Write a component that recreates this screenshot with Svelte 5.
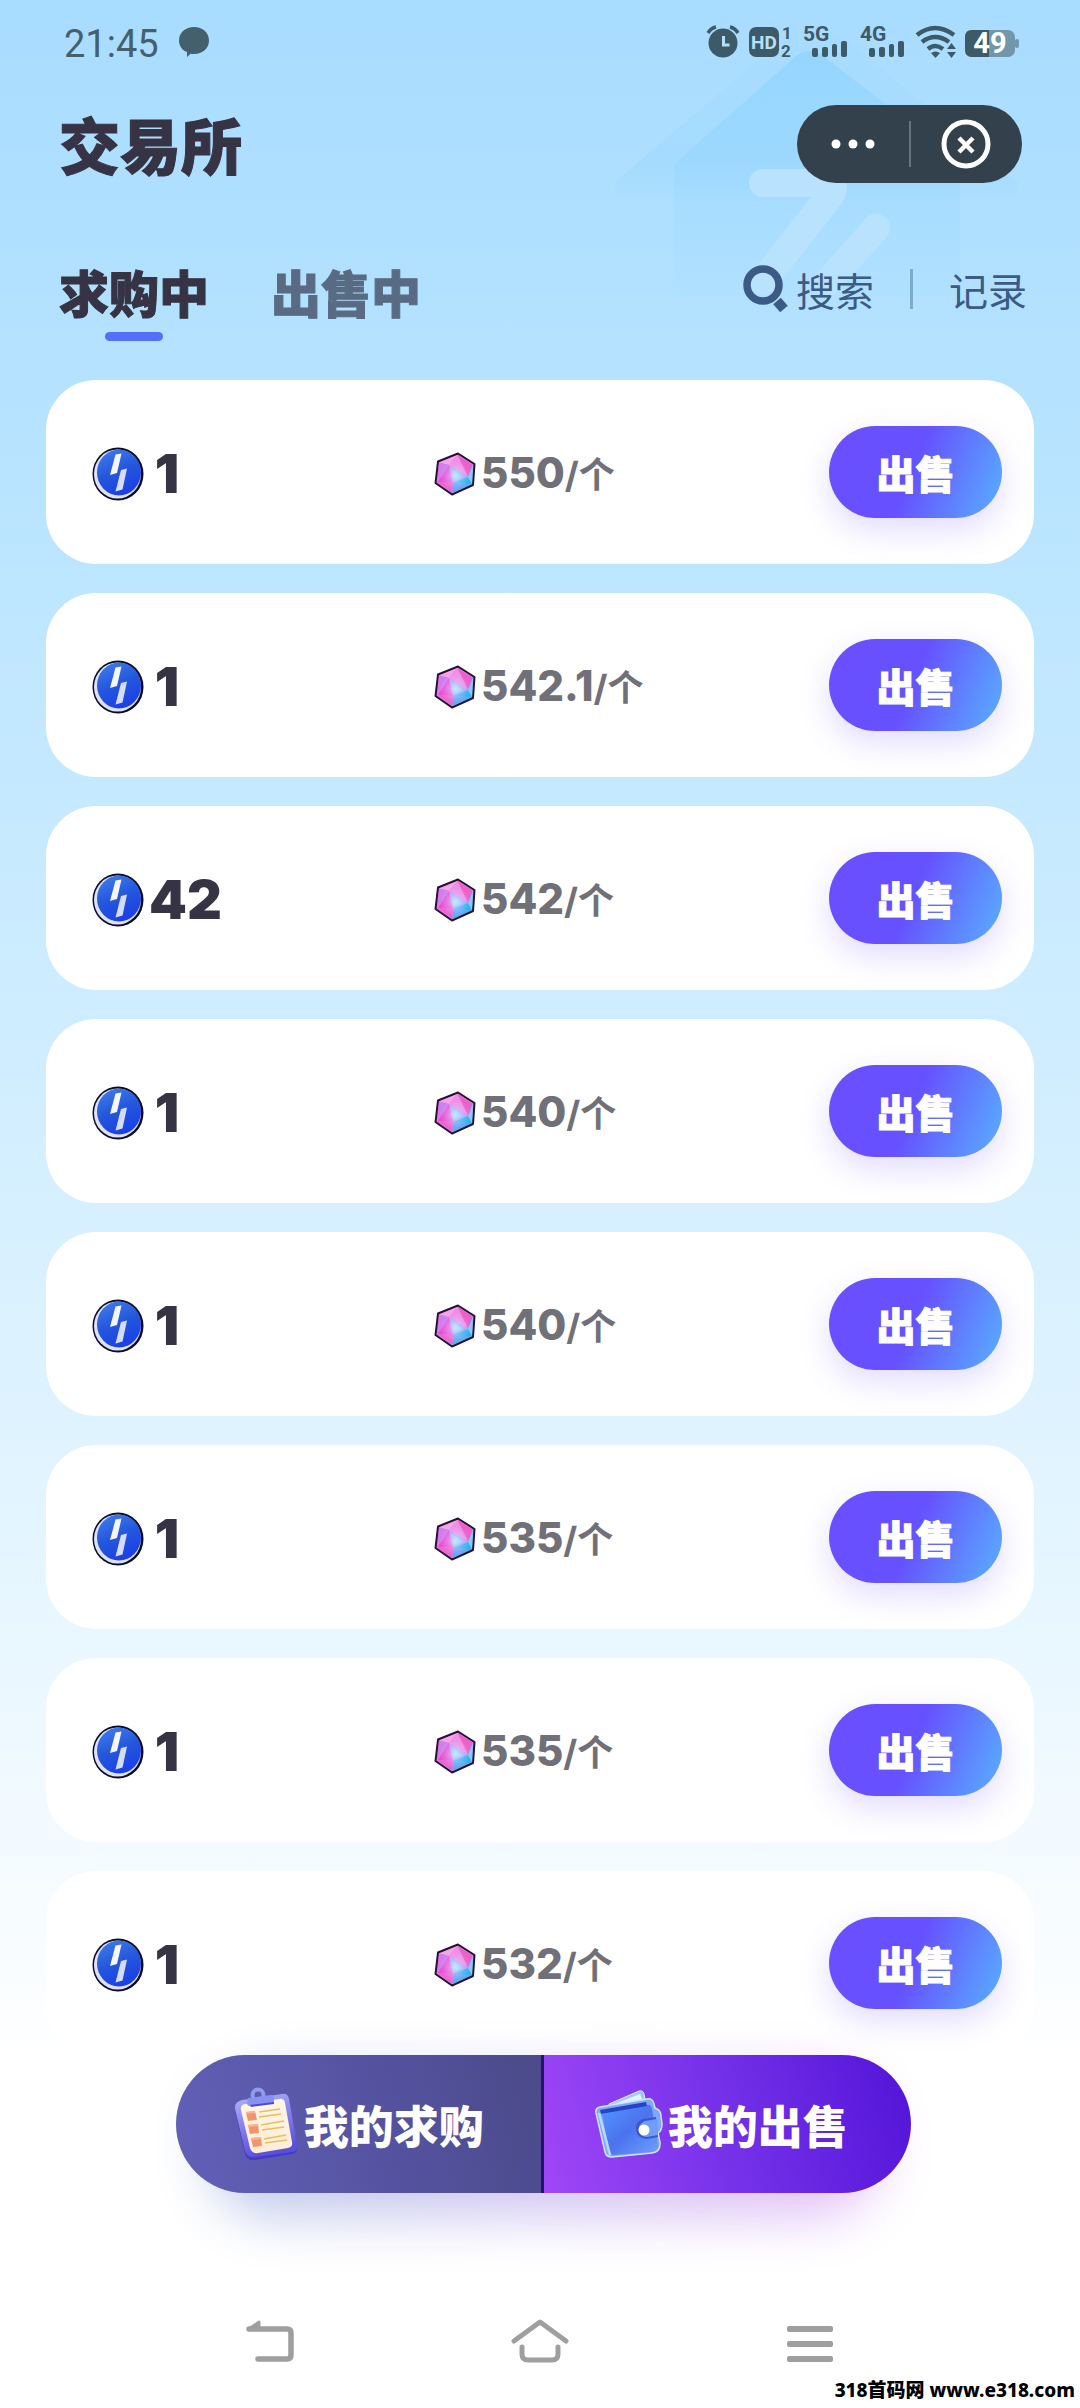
<script>
  let activeTab = "buying";

  const tabs = [
    { id: "buying", label: "求购中" },
    { id: "selling", label: "出售中" },
  ];

  const orders = [
    { amount: 1, price: "550" },
    { amount: 1, price: "542.1" },
    { amount: 42, price: "542" },
    { amount: 1, price: "540" },
    { amount: 1, price: "540" },
    { amount: 1, price: "535" },
    { amount: 1, price: "535" },
    { amount: 1, price: "532" },
  ];

  const selectTab = (id) => {
    activeTab = id;
  };
</script>

<!-- Shared shapes -->
<svg class="sprite" aria-hidden="true">
  <defs>
    <linearGradient id="coinFace" x1="0.2" y1="0" x2="0.6" y2="1">
      <stop offset="0" stop-color="#3f7bea" />
      <stop offset="0.5" stop-color="#2457dc" />
      <stop offset="1" stop-color="#1a3fe8" />
    </linearGradient>
    <linearGradient id="gemFace" x1="0.1" y1="0.2" x2="0.9" y2="0.8">
      <stop offset="0" stop-color="#ef62cf" />
      <stop offset="0.5" stop-color="#d58af2" />
      <stop offset="1" stop-color="#31b4f0" />
    </linearGradient>
    <radialGradient id="gemGlow" cx="0.5" cy="0.55" r="0.4">
      <stop offset="0" stop-color="#d9f2ff" stop-opacity="0.75" />
      <stop offset="1" stop-color="#d9b8ff" stop-opacity="0" />
    </radialGradient>
    <linearGradient id="clipEdge" x1="0" y1="0" x2="0.3" y2="1">
      <stop offset="0" stop-color="#b3b5fb" />
      <stop offset="1" stop-color="#5a50dc" />
    </linearGradient>
    <linearGradient id="clipPaper" x1="0" y1="0" x2="0" y2="1">
      <stop offset="0" stop-color="#fff6e4" />
      <stop offset="1" stop-color="#ffecd6" />
    </linearGradient>
    <linearGradient id="walletFace" x1="0" y1="0" x2="1" y2="1">
      <stop offset="0" stop-color="#5594ff" />
      <stop offset="0.5" stop-color="#4b73ee" />
      <stop offset="1" stop-color="#6fa2fb" />
    </linearGradient>
    <linearGradient id="houseBody" x1="0" y1="0" x2="0" y2="1">
      <stop offset="0" stop-color="#84d0ff" stop-opacity="0.55" />
      <stop offset="1" stop-color="#9cd9ff" stop-opacity="0.1" />
    </linearGradient>
    <linearGradient id="houseRoof" x1="0" y1="0" x2="0" y2="1">
      <stop offset="0" stop-color="#9ad8ff" stop-opacity="0.1" />
      <stop offset="0.8" stop-color="#93d3fb" stop-opacity="0.35" />
      <stop offset="1" stop-color="#9ad8ff" stop-opacity="0.1" />
    </linearGradient>
  </defs>
  <symbol id="coin" viewBox="0 0 52 54">
    <ellipse cx="26" cy="27" rx="25.500" ry="26.500" fill="#0b0d26" />
    <ellipse cx="25.500" cy="27" rx="23.500" ry="24.500" fill="#dfe0fb" />
    <ellipse cx="27" cy="25.500" rx="22" ry="23" fill="url(#coinFace)" />
    <path d="M23.500 7.500l6-1-4.500 19.500-7 2z" fill="#f4f5ff" />
    <path d="M29 23l6-1.500-4.500 21-7 2z" fill="#d6dcfb" />
  </symbol>
  <symbol id="gem" viewBox="0 0 42 44">
    <path d="M4 9.500L24 1.500 40.500 12 39 33 18 42.500 1.500 31z" fill="url(#gemFace)" stroke="#261233" stroke-width="2" stroke-linejoin="round" />
    <path d="M5 10.500L23.500 3 15 13z" fill="#f4a5ea" />
    <path d="M23.500 3L39 12.500 34 25z" fill="#ef5fc9" />
    <path d="M23.500 3L15 13 34 25z" fill="#f08fe4" />
    <path d="M5 10.500L15 13 4 30z" fill="#cf7eee" />
    <path d="M15 13L4 30l15 1z" fill="#ee4bd0" />
    <path d="M15 13l19 12-15 6z" fill="#a9a4f6" />
    <path d="M19 18l10 7-9 3z" fill="#7ad3fa" />
    <path d="M34 25l4 7-19-1z" fill="#22b9ef" />
    <path d="M19 31l19 1-19 9z" fill="#59a9f2" />
    <path d="M4 30l15 1-1 10z" fill="#f25fcf" />
    <path d="M39 12.500L38 32l-4-7z" fill="#8fc6fa" />
    <circle cx="21" cy="22" r="19" fill="url(#gemGlow)" />
  </symbol>
</svg>

<div class="page">
  <svg class="house" viewBox="0 0 420 280" aria-hidden="true">
    <path d="M5 166L174 22q30-24 60 0l174 144v16H5z" fill="url(#houseRoof)" />
    <path d="M64 148L184 42q16-14 32 0l134 104v134H64z" fill="url(#houseBody)" />
    <path d="M153 167h60q16 0 6 14l-66 84" fill="none" stroke="#b9e2ff" stroke-width="28" stroke-linecap="round" stroke-linejoin="round" />
    <path d="M266 212l-48 54" fill="none" stroke="#b9e2ff" stroke-width="28" stroke-linecap="round" />
  </svg>

  <div class="status-bar">
    <div class="status-left">
      <span class="time">21:45</span>
      <svg width="30" height="30" viewBox="0 0 30 30" fill="#44606c" aria-hidden="true">
        <path d="M15 0c8.500 0 15 5.600 15 13.500S23.500 27 15 27q-2-.1-3.500-.3L8 30v-5C3 23 0 19 0 13.500 0 5.600 6.500 0 15 0z" />
      </svg>
    </div>
    <svg class="status-icons" width="314" height="54" viewBox="0 -10 314 54" fill="#3d5a68" aria-hidden="true">
      <circle cx="17" cy="18" r="14.500" />
      <path d="M2 8q3-5 8-6M24 2q5 1 8 6" fill="none" stroke="#3d5a68" stroke-width="3.500" />
      <path d="M17.500 11v9h6" fill="none" stroke="#b4e0fb" stroke-width="3" />
      <rect x="43" y="2" width="30" height="30" rx="7" />
      <text x="58" y="24" class="hd" text-anchor="middle">HD</text>
      <text x="76" y="14" class="tiny">1</text>
      <text x="75" y="32" class="tiny">2</text>
      <text x="97" y="16" class="net">5G</text>
      <g id="bars">
        <rect x="106" y="23" width="6" height="9" rx="2" />
        <rect x="116" y="22" width="6" height="10" rx="2" />
        <rect x="126" y="19" width="5" height="13" rx="2" />
        <rect x="135" y="16" width="6" height="16" rx="2" />
      </g>
      <text x="154" y="16" class="net">4G</text>
      <use href="#bars" x="57" />
      <g fill="none" stroke="#3d5a68" stroke-width="4.500">
        <path d="M211 10q18-14 37 0" />
        <path d="M216 17q13-10 27 0" />
        <path d="M222 24q7-6 15 0" />
      </g>
      <path d="M225 28q4.500-3 9 0l-4.500 5z" />
      <path d="M241 24l4.500-6 4.500 6zM241 27h9l-4.500 6z" />
      <rect x="259" y="5" width="50" height="27" rx="7" fill="#7297aa" />
      <path d="M266 5h17v27h-17q-7 0-7-7V12q0-7 7-7z" />
      <rect x="309" y="14" width="4" height="9" rx="2" fill="#7297aa" />
      <text x="284" y="28" class="battery" text-anchor="middle">49</text>
    </svg>
  </div>

  <header>
    <h1>交易所</h1>
    <div class="capsule">
      <button aria-label="更多">
        <svg width="44" height="10" viewBox="0 0 44 10" fill="#fff">
          <circle cx="5" cy="5" r="4.500" />
          <circle cx="22" cy="5" r="4.500" />
          <circle cx="39" cy="5" r="4.500" />
        </svg>
      </button>
      <span class="capsule-line"></span>
      <button aria-label="关闭">
        <svg width="50" height="50" viewBox="0 0 50 50" fill="none" stroke="#fff">
          <circle cx="25" cy="25" r="22" stroke-width="5" />
          <path d="M18 19l14 14M32 19L18 33" stroke-width="4.500" />
        </svg>
      </button>
    </div>
  </header>

  <div class="toolbar">
    <div class="tabs">
      {#each tabs as tab}
        <button class="tab" class:active={activeTab === tab.id} on:click={() => selectTab(tab.id)}>{tab.label}</button>
      {/each}
    </div>
    <div class="tools">
      <button class="tool">
        <svg width="46" height="48" viewBox="0 0 46 48" fill="none" stroke="#3b5a86" aria-hidden="true">
          <circle cx="20" cy="20" r="16" stroke-width="7.500" />
          <path d="M34 36l7 8" stroke-width="10" stroke-linecap="butt" />
        </svg>
        搜索
      </button>
      <span class="tool-line"></span>
      <button class="tool">记录</button>
    </div>
  </div>

  <ul class="orders">
    {#each orders as order}
      <li class="card">
        <div class="amount">
          <svg width="52" height="54" aria-hidden="true"><use href="#coin" /></svg>
          <span>{order.amount}</span>
        </div>
        <div class="price">
          <svg width="42" height="44" aria-hidden="true"><use href="#gem" /></svg>
          <span>{order.price}<small>/个</small></span>
        </div>
        <button class="sell-btn">出售</button>
      </li>
    {/each}
  </ul>

  <div class="my-orders">
    <button class="mine mine-buy">
      <svg width="66" height="74" viewBox="0 0 66 74" aria-hidden="true">
        <circle cx="25" cy="8" r="5.500" fill="none" stroke="#8f9bf0" stroke-width="4" />
        <path d="M9 15l40-6q6-1 7 5l8 45q1 7-5 8l-37 6q-8 1-10-6L2 24q-1-7 7-9z" fill="#473ac6" />
        <path d="M9 13l40-6q6-1 7 5l8 45q1 7-5 8l-37 5q-8 1-10-6L2 22q-1-7 7-9z" fill="url(#clipEdge)" />
        <path d="M12 17l34-5q5-1 6 4l7 39q1 5-4 6l-30 5q-6 1-8-5L8 23q-1-5 4-6z" fill="url(#clipPaper)" />
        <path d="M15 11l23-3q3 0 3 5v3l-24 3q-3 0-3-3z" fill="#8791f1" />
        <path d="M17 18l24-3v2l-23 3z" fill="#5348c4" />
        <path d="M13 25l9-1 2 9-9 1zM15 38l10-1 1 9-9 1zM18 51l10-1 1 9-9 1z" fill="#f2946f" />
        <path d="M13 25l9-1 0 2-9 1zM15 38l10-1 0 2-9 1zM18 51l10-1 0 2-9 1z" fill="#fbb493" />
        <g stroke="#e9bd62" stroke-width="1.500">
          <path d="M26 25l21-3M26 30l22-3M28 38l23-4M29 43l22-3M31 52l22-4M32 56l22-3" />
        </g>
      </svg>
      我的求购
    </button>
    <button class="mine mine-sell">
      <svg width="68" height="68" viewBox="0 0 68 68" aria-hidden="true">
        <path d="M14 14L44 1q4-1 5 3l3 14-38 6z" fill="#9cc9fb" stroke="#dbeeff" />
        <path d="M17 15L45 4l2 5-27 9z" fill="#e3f3ff" />
        <path d="M5 17l47-8q6-1 7 5l1 4q6 2 6 8l1 8q0 7-4 9l2 9q1 10-8 11l-40 4q-6 0-7-5L1 23q-1-5 4-6z" fill="#7fa8fa" stroke="#cfe3ff" stroke-width="1.500" />
        <path d="M7 24l45-9q4-1 5 4l6 34q1 8-6 9l-38 3q-4 0-5-4z" fill="url(#walletFace)" />
        <path d="M5 20l46-8 1 4-46 8z" fill="#2345c4" />
        <path d="M4 23l11 42" stroke="#b8d8ff" stroke-width="2.500" />
        <path d="M61 27l-13 2q-8 3-7 11 1 8 10 9l12-2z" fill="#3d56d0" />
        <path d="M62 29l-12 2q-7 3-6 9 1 7 8 7l11-2z" fill="#6e9cf8" />
        <circle cx="49" cy="40" r="5.500" fill="#fff" />
      </svg>
      我的出售
    </button>
  </div>

  <nav>
    <button aria-label="返回">
      <svg width="48" height="44" viewBox="0 0 48 44" fill="none" stroke="#9f9f9f" stroke-width="6" stroke-linecap="round" stroke-linejoin="round">
        <path d="M3 10h38q4 0 4 4v22q0 4-4 4H12" stroke-width="5.500" />
        <path d="M3 10l10-7v7z" fill="#9f9f9f" stroke-width="3" />
      </svg>
    </button>
    <button aria-label="主页">
      <svg width="58" height="44" viewBox="0 0 58 44" fill="none" stroke="#9f9f9f" stroke-width="5" stroke-linecap="round" stroke-linejoin="round">
        <path d="M3 22L29 3l26 19" />
        <path d="M11 28v7q0 6 6 6h24q6 0 6-6v-7" />
      </svg>
    </button>
    <button aria-label="菜单">
      <svg width="46" height="44" viewBox="0 0 46 44" fill="#9f9f9f">
        <rect y="7" width="46" height="6" rx="2" />
        <rect y="22" width="46" height="6" rx="2" />
        <rect y="37" width="46" height="6" rx="2" />
      </svg>
    </button>
  </nav>

  <p class="site">318首码网 www.e318.com</p>
</div>

<style>
  :global(body) {
    margin: 0;
    background: #fff;
  }

  .sprite {
    position: absolute;
    width: 0;
    height: 0;
  }

  .page {
    position: relative;
    font-family: Inter, "Noto Sans CJK SC", sans-serif;
    color: #363344;
    background: linear-gradient(to bottom, #a8dcff 0%, #b6e3ff 17%, #caebff 38%, #e4f5ff 64%, #fff 86%);
    overflow: hidden;
  }

  /* Faint house behind the header */
  .house {
    position: absolute;
    top: 16px;
    right: 50px;
    width: 420px;
    height: 280px;
  }

  button {
    display: flex;
    align-items: center;
    justify-content: center;
    margin: 0;
    padding: 0;
    border: none;
    background: none;
    color: inherit;
    font-family: "Noto Sans CJK SC", sans-serif;
    cursor: pointer;
  }

  svg {
    flex: none;
  }

  /* Status bar */
  .status-bar {
    position: relative;
    display: flex;
    justify-content: space-between;
    align-items: center;
    height: 84px;
    padding: 0 60px 0 64px;
  }

  .status-left {
    display: flex;
    align-items: center;
    gap: 20px;
  }

  .time {
    padding-top: 4px;
    font-family: Roboto, sans-serif;
    font-size: 38px;
    line-height: 48px;
    color: #44606c;
  }

  .status-icons {
    overflow: visible;
    font-family: Roboto, sans-serif;
    font-weight: 700;
  }

  .hd {
    font-size: 19px;
    fill: #b4e0fb;
  }

  .tiny {
    font-size: 17px;
  }

  .net {
    font-size: 21px;
  }

  .battery {
    font-size: 29px;
    fill: #fff;
  }

  /* Header */
  header {
    position: relative;
    display: flex;
    justify-content: space-between;
    align-items: center;
    padding: 21px 58px 0 59px;
  }

  h1 {
    margin: 0;
    font-family: "Noto Sans CJK SC", sans-serif;
    font-size: 61px;
    line-height: 78px;
    font-weight: 900;
    -webkit-text-stroke: 1px #363344;
  }

  .capsule {
    display: grid;
    grid-template-columns: 1fr 2px 1fr;
    align-items: center;
    width: 225px;
    height: 78px;
    border-radius: 39px;
    background: #32414b;
  }

  .capsule-line {
    height: 46px;
    background: #66747d;
  }

  /* Tabs and tools */
  .toolbar {
    position: relative;
    display: flex;
    justify-content: space-between;
    align-items: flex-start;
    padding: 74px 53px 39px 59px;
  }

  .tabs {
    display: flex;
    gap: 62px;
  }

  .tab {
    flex-direction: column;
    gap: 7px;
    font-size: 50px;
    line-height: 68px;
    font-weight: 900;
    color: #596b82;
    -webkit-text-stroke: 1px currentColor;
  }

  .tab::after {
    content: "";
    width: 58px;
    height: 9px;
    border-radius: 5px;
  }

  .tab.active {
    color: #363344;
  }

  .tab.active::after {
    background: #566ffb;
  }

  .tools {
    display: flex;
    align-items: center;
    height: 64px;
  }

  .tool {
    gap: 7px;
    font-size: 39px;
    line-height: 60px;
    color: #3b5a86;
  }

  .tool-line {
    width: 3px;
    height: 40px;
    margin: 0 36px;
    background: #7aaccb;
  }

  /* Order list */
  .orders {
    display: flex;
    flex-direction: column;
    gap: 29px;
    margin: 0;
    padding: 0 46px;
    list-style: none;
  }

  .card {
    display: grid;
    grid-template-columns: 342px 1fr auto;
    align-items: center;
    height: 184px;
    padding: 0 32px 0 46px;
    border-radius: 50px;
    background: #fff;
    box-sizing: border-box;
  }

  .amount {
    display: flex;
    align-items: center;
    gap: 5px;
    padding-top: 3px;
    font-size: 54px;
    line-height: 66px;
    font-weight: 900;
  }

  .amount span {
    min-width: 36px;
    text-align: center;
  }

  .price {
    display: flex;
    align-items: center;
    gap: 5px;
    padding-top: 3px;
    font-size: 42px;
    line-height: 56px;
    font-weight: 800;
    color: #717078;
  }

  .price small {
    font-size: 36px;
    font-weight: 700;
  }

  .sell-btn {
    width: 173px;
    height: 92px;
    border-radius: 46px;
    font-size: 39px;
    font-weight: 900;
    color: #fff;
    background: linear-gradient(112deg, #6b4eff 0%, #6651ff 48%, #5aa2ff 92%);
    box-shadow: 0 12px 32px rgba(104, 78, 255, 0.2);
    -webkit-text-stroke: 1px #fff;
  }

  /* Bottom pill */
  .my-orders {
    position: relative;
    isolation: isolate;
    display: grid;
    grid-template-columns: 1fr 1fr;
    height: 138px;
    margin: 0 169px 0 176px;
  }

  .my-orders::before {
    content: "";
    position: absolute;
    inset: 20px 30px -24px;
    z-index: -1;
    border-radius: 69px;
    background: linear-gradient(to right, #6f8fd0, #c774f2);
    filter: blur(26px);
    opacity: 0.45;
  }

  .mine {
    gap: 5px;
    font-size: 45px;
    font-weight: 900;
    color: #fff;
  }

  .mine-buy {
    border-right: 3px solid #1f1466;
    border-radius: 69px 0 0 69px;
    background: linear-gradient(75deg, #6260b8 0%, #5553a0 55%, #4b4a8a 100%);
  }

  .mine-sell {
    padding-right: 12px;
    border-radius: 0 69px 69px 0;
    background: linear-gradient(75deg, #a046f8 0%, #7431e8 50%, #5314d8 100%);
  }

  /* System navigation */
  nav {
    display: flex;
    justify-content: space-around;
    padding: 126px 135px 0;
  }

  nav button {
    flex: 1;
  }

  .site {
    margin: 0;
    padding: 13px 5px 4px;
    text-align: right;
    font-family: "Noto Sans", "Noto Sans CJK SC", sans-serif;
    font-size: 19px;
    line-height: 28px;
    font-weight: 800;
    color: #000;
  }
</style>
